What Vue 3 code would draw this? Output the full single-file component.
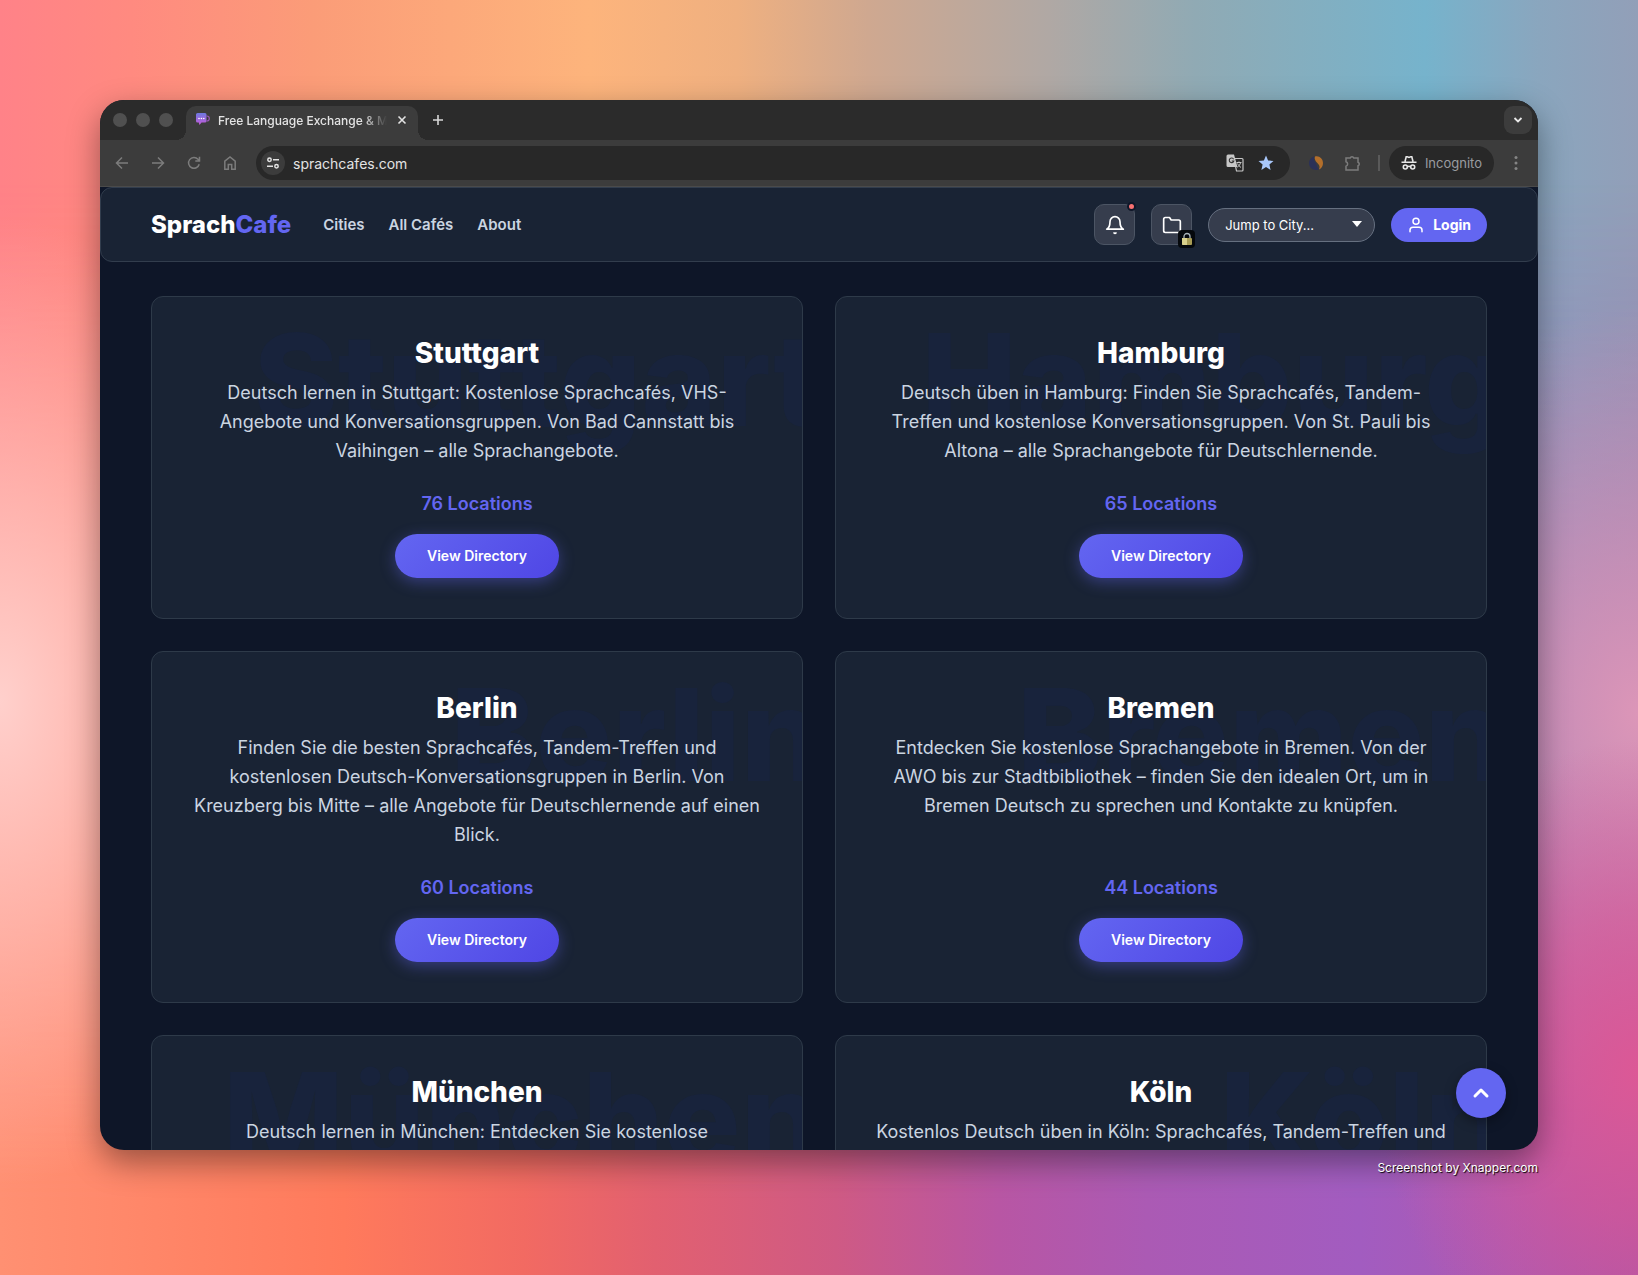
<script setup>
import { ref } from 'vue'

const city = ref('')

const links = ['Cities', 'All Cafés', 'About']

const cities = [
    {
        name: 'Stuttgart',
        text: 'Deutsch lernen in Stuttgart: Kostenlose Sprachcafés, VHS-Angebote und Konversationsgruppen. Von Bad Cannstatt bis Vaihingen – alle Sprachangebote.',
        locations: 76
    },
    {
        name: 'Hamburg',
        text: 'Deutsch üben in Hamburg: Finden Sie Sprachcafés, Tandem-Treffen und kostenlose Konversationsgruppen. Von St. Pauli bis Altona – alle Sprachangebote für Deutschlernende.',
        locations: 65
    },
    {
        name: 'Berlin',
        text: 'Finden Sie die besten Sprachcafés, Tandem-Treffen und kostenlosen Deutsch-Konversationsgruppen in Berlin. Von Kreuzberg bis Mitte – alle Angebote für Deutschlernende auf einen Blick.',
        locations: 60
    },
    {
        name: 'Bremen',
        text: 'Entdecken Sie kostenlose Sprachangebote in Bremen. Von der AWO bis zur Stadtbibliothek – finden Sie den idealen Ort, um in Bremen Deutsch zu sprechen und Kontakte zu knüpfen.',
        locations: 44
    },
    {
        name: 'München',
        text: 'Deutsch lernen in München: Entdecken Sie kostenlose',
    },
    {
        name: 'Köln',
        text: 'Kostenlos Deutsch üben in Köln: Sprachcafés, Tandem-Treffen und',
    }
]
</script>

<template>
    <div class="desktop">
        <div class="window">
            <div class="tabstrip">
                <div class="lights"><i></i><i></i><i></i></div>
                <div class="tab">
                    <svg class="favicon" width="14" height="14" viewBox="0 0 14 14">
                        <defs>
                            <linearGradient id="fav" x1="0" y1="0" x2="0" y2="1">
                                <stop offset="0" stop-color="#6d78e0" />
                                <stop offset="1" stop-color="#c45ad8" />
                            </linearGradient>
                        </defs>
                        <path d="M1.500 0h7.500a1.500 1.500 0 0 1 1.500 1.500V8A1.500 1.500 0 0 1 9 9.500H5.500L3.500 12 2.800 9.500H1.500A1.500 1.500 0 0 1 0 8V1.500A1.500 1.500 0 0 1 1.500 0z" fill="url(#fav)" />
                        <path d="M10.500 3h.3a2 2 0 0 1 0 5h-.3" fill="none" stroke="#9a58b8" stroke-width="1.200" />
                        <circle cx="3" cy="5.500" r=".8" fill="#fff" />
                        <circle cx="5.400" cy="5.500" r=".8" fill="#fff" />
                        <circle cx="7.800" cy="5.500" r=".8" fill="#fff" />
                    </svg>
                    <span class="tab-title">Free Language Exchange &amp; M</span>
                    <button class="plain" aria-label="Close tab">
                        <svg width="10" height="10" viewBox="0 0 10 10"><path d="M1.500 1.500l7 7M8.500 1.500l-7 7" stroke="#e3e3e3" stroke-width="1.600" /></svg>
                    </button>
                </div>
                <button class="plain new-tab" aria-label="New tab">
                    <svg width="12" height="12" viewBox="0 0 12 12"><path d="M6 1v10M1 6h10" stroke="#d8d8d8" stroke-width="1.600" /></svg>
                </button>
                <button class="tab-search" aria-label="Search tabs">
                    <svg width="10" height="10" viewBox="0 0 10 10"><path d="M1.500 3l3.500 3.500L8.500 3" fill="none" stroke="#e8e8e8" stroke-width="1.800" /></svg>
                </button>
            </div>

            <div class="toolbar">
                <div class="history">
                    <button class="plain" aria-label="Back">
                        <svg width="16" height="16" viewBox="0 0 16 16"><path d="M14 8H3M8 2.500L2.500 8 8 13.500" /></svg>
                    </button>
                    <button class="plain" aria-label="Forward">
                        <svg width="16" height="16" viewBox="0 0 16 16"><path d="M2 8h11M8 2.500L13.500 8 8 13.500" /></svg>
                    </button>
                    <button class="plain" aria-label="Reload">
                        <svg width="16" height="16" viewBox="0 0 16 16"><path d="M13.200 9.200A5.400 5.400 0 1 1 12 4.300l1.200 1.500M13.500 1.800v4.200H9.300" /></svg>
                    </button>
                    <button class="plain" aria-label="Home">
                        <svg width="16" height="16" viewBox="0 0 16 16"><path d="M2.800 14.200V6.200L8 2l5.200 4.200v8H9.700V9.500H6.300v4.700z" /></svg>
                    </button>
                </div>
                <div class="omnibox">
                    <span class="site-info">
                        <svg width="14" height="14" viewBox="0 0 14 14" fill="none" stroke="#e3e3e3" stroke-width="1.500">
                            <circle cx="3.500" cy="3.800" r="1.700" /><path d="M7 3.800h6M1 10.200h6" /><circle cx="10.500" cy="10.200" r="1.700" />
                        </svg>
                    </span>
                    <input aria-label="Address" value="sprachcafes.com" />
                    <svg width="18" height="18" viewBox="0 0 18 18">
                        <path d="M8 4.500h8a1 1 0 0 1 1 1v10.500a1 1 0 0 1-1 1h-5.500z" fill="#282828" stroke="#c7c7c7" stroke-width="1.200" />
                        <path d="M2 .5h6L11.500 13H2A1.500 1.500 0 0 1 .5 11.500V2A1.500 1.500 0 0 1 2 .5z" fill="#c7c7c7" />
                        <path d="M7.600 5.200A2.300 2.300 0 1 0 7.800 7H5.700" fill="none" stroke="#333" stroke-width="1.100" />
                        <path d="M10.500 8.500h5M13 7.500v1M14.600 8.500c-.4 2-1.600 3.600-3.200 4.700M11.600 9.500c.6 1.600 1.700 2.900 3.400 3.900" fill="none" stroke="#c7c7c7" />
                    </svg>
                    <svg width="16" height="16" viewBox="0 0 16 16"><path d="M8 .5l2.100 5 5.400.5-4.100 3.600 1.200 5.400L8 12.100 3.400 15l1.200-5.400L.5 6l5.400-.5z" fill="#a8c7fa" /></svg>
                </div>
                <svg width="16" height="16" viewBox="0 0 16 16">
                    <path d="M6.500 1.500C3.500 2 1 4.800 1 8.300 1 12 4 15 8 15c1.500 0 2.500-.5 3-1.500C8.500 12 9 9.500 7.500 7.500 6 5.500 5.800 3 6.500 1.500z" fill="#2b3157" />
                    <path d="M7 1.500C11 .2 15 3.500 15 8c0 3-1.500 5.500-4 6.500 1.300-3 .3-4.500-1.200-6C8 6.800 6 4 7 1.500z" fill="#b36f2b" />
                </svg>
                <svg class="puzzle" width="18" height="18" viewBox="0 0 18 18"><path d="M2 4h4.200a1.900 1.900 0 0 1 3.600 0H14v4.200a1.900 1.900 0 0 1 0 3.600V16H2v-3.800a2.300 2.300 0 0 0 0-4.400z" /></svg>
                <span class="divider"></span>
                <span class="incognito">
                    <svg width="16" height="16" viewBox="0 0 16 16" fill="none" stroke="#e8e8e8" stroke-width="1.600">
                        <path d="M4 6.500L5.200 1.800h1.100L8 2.400l1.700-.6h1.100L12 6.500M.5 7.300h15" />
                        <circle cx="4.300" cy="12" r="2" /><circle cx="11.700" cy="12" r="2" /><path d="M6.300 11.700q1.700-1 3.400 0" />
                    </svg>
                    Incognito
                </span>
                <button class="plain" aria-label="Menu">
                    <svg width="4" height="16" viewBox="0 0 4 16" fill="#858585"><circle cx="2" cy="2.500" r="1.500" /><circle cx="2" cy="8" r="1.500" /><circle cx="2" cy="13.500" r="1.500" /></svg>
                </button>
            </div>

            <div class="page">
                <header>
                    <a class="logo" href="#">Sprach<span>Cafe</span></a>
                    <nav>
                        <a v-for="link in links" :key="link" href="#">{{ link }}</a>
                    </nav>
                    <div class="actions">
                        <button class="square" aria-label="Notifications">
                            <svg width="20" height="20" viewBox="0 0 24 24"><path d="M18 8A6 6 0 0 0 6 8c0 7-4 9-4 9h20s-4-2-4-9M13.200 21.500a2 2 0 0 1-2.400 0" /></svg>
                            <span class="dot"></span>
                        </button>
                        <button class="square" aria-label="Saved cafés">
                            <svg width="20" height="20" viewBox="0 0 24 24"><path d="M22 19a2 2 0 0 1-2 2H4a2 2 0 0 1-2-2V5a2 2 0 0 1 2-2h5l2 3h9a2 2 0 0 1 2 2z" /></svg>
                            <span class="lock">
                                <svg width="12" height="14" viewBox="0 0 12 14">
                                    <path d="M3 7V4.500a3 3 0 0 1 6 0V7" fill="none" stroke="#a9b4ba" stroke-width="1.300" />
                                    <rect x="1" y="6" width="10" height="7" rx="1" fill="#a89c54" /><path d="M1 6h5v7H2a1 1 0 0 1-1-1z" fill="#d8d08c" />
                                </svg>
                            </span>
                        </button>
                        <div class="jump">
                            <select v-model="city" aria-label="Jump to City">
                                <option value="">Jump to City...</option>
                                <option v-for="c in cities" :key="c.name">{{ c.name }}</option>
                            </select>
                            <svg width="10" height="6" viewBox="0 0 10 6"><path d="M0 0h10L5 6z" fill="#fff" /></svg>
                        </div>
                        <button class="login">
                            <svg width="18" height="18" viewBox="0 0 24 24"><path d="M20 21v-2a4 4 0 0 0-4-4H8a4 4 0 0 0-4 4v2" /><circle cx="12" cy="7" r="4" /></svg>
                            Login
                        </button>
                    </div>
                </header>

                <main>
                    <article v-for="c in cities" :key="c.name" class="card">
                        <span class="ghost" aria-hidden="true">{{ c.name }}</span>
                        <h2>{{ c.name }}</h2>
                        <p>{{ c.text }}</p>
                        <template v-if="c.locations">
                            <strong>{{ c.locations }} Locations</strong>
                            <a class="view" href="#">View Directory</a>
                        </template>
                    </article>
                </main>

                <button class="to-top" aria-label="Back to top">
                    <svg width="24" height="24" viewBox="0 0 24 24"><path d="M6 15l6-6 6 6" /></svg>
                </button>
            </div>
        </div>
        <small>Screenshot by Xnapper.com</small>
    </div>
</template>

<style>
body {
    margin: 0;
}
</style>

<style scoped>
* {
    box-sizing: border-box;
}

.desktop {
    position: relative;
    height: 100vh;
    padding: 100px 100px 96px;
    display: flex;
    flex-direction: column;
    font-family: Inter, "Liberation Sans", sans-serif;
    background: linear-gradient(90deg, #ff8288 0%, #ff8a80 8%, #fb9c78 19%, #fdb47c 36%, #efb080 45%, #cfa890 53%, #b0a8a4 64%, #90aab4 73%, #76b3cc 87%, #8aa6be 94%, #929fb8 100%);
}

/* wallpaper: warm-to-violet floor fading in over the top colours */
.desktop::before {
    content: "";
    position: absolute;
    inset: 0;
    background: linear-gradient(90deg, #ff9072 0%, #ff7a5c 21%, #f26a62 32%, #e26070 40%, #cf5a84 51%, #b856a4 61%, #ab5ab4 70%, #a25cc0 83%, #aa5ab4 92%, #a854a8 100%);
    mask-image: linear-gradient(180deg, transparent 14%, #000 94%);
}

/* wallpaper: glow on the left and right edges */
.desktop::after {
    content: "";
    position: absolute;
    inset: 0;
    background:
        radial-gradient(ellipse 18% 38% at 0% 55%, #ffd0cc 0%, #ffd0cc90 45%, #ffd0cc00 100%),
        radial-gradient(ellipse 16% 26% at 100% 84%, #dc5896 0%, #dc5896a0 45%, #dc589600 100%),
        radial-gradient(ellipse 18% 32% at 100% 56%, #dc96b8 0%, #dc96b880 50%, #dc96b800 100%);
}

button,
select,
input {
    font-family: inherit;
}

.window {
    position: relative;
    z-index: 1;
    flex: 1;
    min-height: 0;
    display: flex;
    flex-direction: column;
    overflow: hidden;
    border-radius: 24px;
    background: #0e1628;
    box-shadow: 0 12px 32px rgba(0, 0, 0, .4);
}

.plain {
    display: flex;
    padding: 0;
    border: 0;
    background: none;
}

.tabstrip {
    flex: none;
    display: flex;
    align-items: center;
    height: 40px;
    padding: 0 6px 0 13px;
    background: #2b2b2b;
}

.lights {
    display: flex;
    gap: 9px;
    margin-right: 13px;
}

.lights i {
    width: 14px;
    height: 14px;
    border-radius: 50%;
    background: #505050;
}

.tab {
    position: relative;
    align-self: flex-end;
    display: flex;
    align-items: center;
    width: 232px;
    height: 34px;
    padding: 0 11px 6px 10px;
    border-radius: 10px 10px 0 0;
    background: #3c3c3c;
}

/* concave feet of the active tab */
.tab::before,
.tab::after {
    content: "";
    position: absolute;
    bottom: 0;
    width: 10px;
    height: 10px;
}

.tab::before {
    right: 100%;
    background: radial-gradient(circle at 0 0, transparent 10px, #3c3c3c 10px);
}

.tab::after {
    left: 100%;
    background: radial-gradient(circle at 100% 0, transparent 10px, #3c3c3c 10px);
}

.tab-title {
    flex: 1;
    margin: 0 10px 0 8px;
    overflow: hidden;
    white-space: nowrap;
    font-size: 12px;
    font-weight: 500;
    color: #e3e3e3;
    mask-image: linear-gradient(90deg, #000 86%, transparent);
}

.new-tab {
    margin-left: 14px;
}

.tab-search {
    display: flex;
    align-items: center;
    justify-content: center;
    width: 28px;
    height: 28px;
    margin-left: auto;
    padding: 0;
    border: 0;
    border-radius: 9px;
    background: #3c3c3c;
}

.toolbar {
    flex: none;
    display: flex;
    align-items: center;
    height: 47px;
    padding: 0 20px 0 14px;
    border-bottom: 1px solid #4a4a4a;
    background: #3c3c3c;
}

.history {
    display: flex;
    gap: 20px;
    margin-right: 18px;
}

.history svg,
.puzzle {
    fill: none;
    stroke: #7c7c7c;
    stroke-width: 1.5;
}

.omnibox {
    flex: 1;
    display: flex;
    align-items: center;
    gap: 14px;
    height: 34px;
    margin-right: 18px;
    padding: 0 16px 0 5px;
    border-radius: 17px;
    background: #282828;
}

.site-info {
    display: flex;
    align-items: center;
    justify-content: center;
    width: 24px;
    height: 24px;
    border-radius: 50%;
    background: #3c3c3c;
}

.omnibox input {
    flex: 1;
    min-width: 0;
    margin-left: -6px;
    padding: 0;
    border: 0;
    background: none;
    font-size: 14px;
    color: #e3e3e3;
}

.puzzle {
    margin-left: 20px;
}

.divider {
    width: 2px;
    height: 16px;
    margin: 0 9px 0 16px;
    background: #5a5a5a;
}

.incognito {
    display: flex;
    align-items: center;
    gap: 8px;
    height: 34px;
    margin-right: 20px;
    padding: 0 12px;
    border-radius: 17px;
    background: #282828;
    font-size: 13px;
    color: #9a9ca0;
}

.page {
    position: relative;
    flex: 1;
    min-height: 0;
    overflow: hidden;
}

header {
    display: flex;
    align-items: center;
    padding: 16px 50px;
    border: 1px solid #323d4d;
    border-radius: 12px;
    background: #192334;
}

a {
    text-decoration: none;
}

.logo {
    font-size: 24px;
    font-weight: 800;
    color: #fff;
}

.logo span {
    color: #6366f1;
}

nav {
    display: flex;
    gap: 24px;
    margin-left: 32px;
}

nav a {
    font-size: 15px;
    font-weight: 600;
    color: #cbd5e1;
}

.actions {
    display: flex;
    align-items: center;
    gap: 16px;
    margin-left: auto;
}

.square {
    position: relative;
    display: flex;
    align-items: center;
    justify-content: center;
    width: 41px;
    height: 41px;
    padding: 0;
    border: 1px solid #4c5564;
    border-radius: 10px;
    background: #363d4d;
}

.square svg,
.login svg,
.to-top svg {
    fill: none;
    stroke: #fff;
    stroke-width: 2;
    stroke-linecap: round;
    stroke-linejoin: round;
}

.dot {
    position: absolute;
    top: -3px;
    right: -2px;
    width: 9px;
    height: 9px;
    border: 2px solid #0f1729;
    border-radius: 50%;
    background: #f87171;
}

.lock {
    position: absolute;
    right: -4px;
    bottom: -4px;
    display: flex;
    align-items: center;
    justify-content: center;
    width: 17px;
    height: 18px;
    border-radius: 4px;
    background: #05080c;
}

.lock svg {
    stroke: none;
}

.jump {
    display: flex;
    align-items: center;
    position: relative;
}

.jump select {
    width: 167px;
    height: 34px;
    padding: 0 16px;
    border: 1px solid #667080;
    border-radius: 17px;
    appearance: none;
    background: #363d4d;
    font-size: 13px;
    color: #fff;
}

.jump svg {
    position: absolute;
    top: 13px;
    right: 13px;
    pointer-events: none;
}

.login {
    display: flex;
    align-items: center;
    gap: 8px;
    height: 34px;
    padding: 0 16px;
    border: 0;
    border-radius: 17px;
    background: #6366f1;
    font-size: 14px;
    font-weight: 700;
    color: #fff;
}

main {
    display: grid;
    grid-template-columns: 1fr 1fr;
    gap: 32px;
    padding: 34px 51px;
}

.card {
    position: relative;
    display: flex;
    flex-direction: column;
    align-items: center;
    overflow: hidden;
    padding: 40px;
    border: 1px solid #2e3a49;
    border-radius: 12px;
    background: #192334;
    text-align: center;
}

.ghost {
    position: absolute;
    top: -20px;
    right: -20px;
    line-height: 205px;
    font-size: 128px;
    font-weight: 800;
    color: #18233c;
}

.card h2 {
    position: relative;
    margin: 0 0 8px;
    font-size: 28px;
    line-height: 33px;
    font-weight: 800;
    color: #fff;
}

.card p {
    position: relative;
    margin: 0 0 24px;
    font-size: 18px;
    line-height: 29px;
    color: #cbd5e1;
}

.card strong {
    margin-top: auto;
    font-size: 18px;
    line-height: 29px;
    font-weight: 600;
    color: #6366f1;
}

.view {
    margin-top: 16px;
    padding: 0 32px;
    border-radius: 22px;
    background: linear-gradient(135deg, #6366f1, #4f46e5);
    box-shadow: 0 4px 15px rgba(99, 102, 241, .4);
    font-size: 14px;
    line-height: 44px;
    font-weight: 600;
    color: #fff;
}

.to-top {
    position: absolute;
    right: 32px;
    bottom: 32px;
    display: flex;
    align-items: center;
    justify-content: center;
    width: 50px;
    height: 50px;
    padding: 0;
    border: 0;
    border-radius: 50%;
    background: #6366f1;
    box-shadow: 0 4px 12px rgba(0, 0, 0, .35);
}

.to-top svg {
    stroke-width: 3;
}

small {
    position: relative;
    z-index: 1;
    height: 29px;
    line-height: 36px;
    text-align: right;
    font-size: 12px;
    color: #fff;
    text-shadow: 1px 1px 1px #000;
}
</style>
